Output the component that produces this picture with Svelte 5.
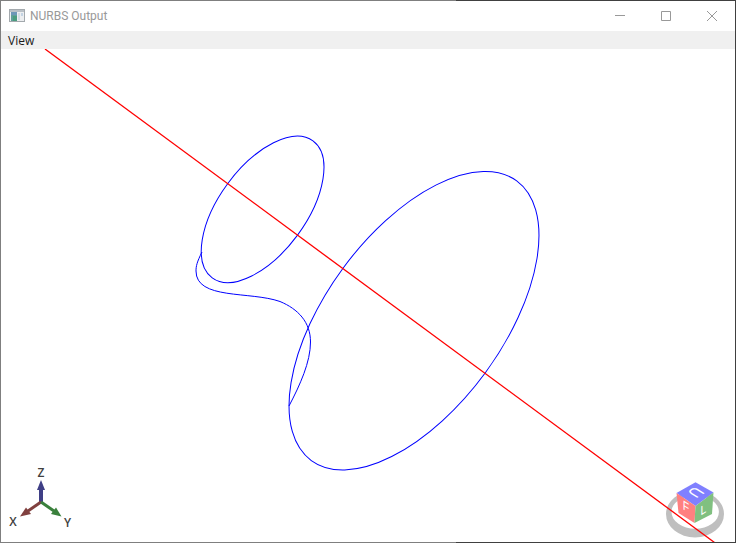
<script>
  const ellipses = [
    { cx: 262.6, cy: 209.4, rx: 85, ry: 43.4, angle: -53.65 },
    { cx: 414, cy: 320.7, rx: 173.5, ry: 88.3, angle: -53.7 }
  ];
</script>

<main class="window">
  <header class="titlebar">
    <svg class="app-icon" viewBox="0 0 16 14" width="16" height="14" aria-hidden="true">
      <rect x="0.5" y="0.5" width="15" height="12" fill="#eceef0" stroke="#a3a9ad" />
      <rect x="1" y="1" width="14" height="2" fill="#b9c0c6" />
      <rect x="2" y="3" width="6" height="9" fill="#5f9f9a" />
      <rect x="2" y="3" width="6" height="3" fill="#6d97b8" />
      <rect x="4" y="7" width="4" height="5" fill="#4b9c7e" />
      <rect x="9" y="4" width="2" height="7" fill="#d3dce4" />
      <rect x="12" y="4" width="2" height="3" fill="#c3d3e3" />
    </svg>
    <h1>NURBS Output</h1>
    <div class="controls">
      <button aria-label="Minimize">
        <svg viewBox="0 0 10 10" width="10" height="10"><path d="M0 4.5H10" /></svg>
      </button>
      <button aria-label="Maximize">
        <svg viewBox="0 0 10 10" width="10" height="10"><path d="M.5 .5H9.5V9.5H.5Z" /></svg>
      </button>
      <button aria-label="Close">
        <svg viewBox="0 0 10 10" width="10" height="10"><path d="M0 0L10 10M10 0L0 10" /></svg>
      </button>
    </div>
  </header>

  <nav class="menubar"><button>View</button></nav>

  <svg class="scene" viewBox="1 49 734 493" role="img" aria-label="NURBS curves">
    <g class="curves">
      {#each ellipses as e}
        <ellipse cx={e.cx} cy={e.cy} rx={e.rx} ry={e.ry} transform="rotate({e.angle} {e.cx} {e.cy})" />
      {/each}
      <path d="M202 252C197 262 196 266 196 271C196 300 250 291 280 301.500C298 309 310.5 322 310.5 342C310.5 362 300 385 289 406" />
    </g>

    <g class="triad">
      <path d="M41 502V487" stroke="#3f3f86" stroke-width="4" />
      <path d="M41 480L45 490H37Z" fill="#3f3f86" />
      <path d="M41 502L28 511" stroke="#80403f" stroke-width="3" />
      <path d="M20 516.500L26 507.500L31 514Z" fill="#80403f" />
      <path d="M41 502L54 511" stroke="#3a803c" stroke-width="3" />
      <path d="M61.500 516.500L51 514L56 507.500Z" fill="#3a803c" />
      <text x="41" y="477">Z</text>
      <text x="13" y="526">X</text>
      <text x="67.500" y="527">Y</text>
    </g>

    <g class="cube">
      <path
        fill="#bfbfbf"
        fill-rule="evenodd"
        d="M666 514a29 23.500 0 1 0 58 0a29 23.500 0 1 0 -58 0ZM671.500 512a23.700 16.700 0 1 0 47.400 0a23.700 16.700 0 1 0 -47.400 0Z"
      />
      <path fill="#8080ff" d="M676.500 493L695.500 482.300L713.500 492.500L695.500 506Z" />
      <path fill="#ff8080" d="M676.500 493L695.500 506L694.500 523L678.500 513Z" />
      <path fill="#80c080" d="M695.500 506L713.500 492.500L712 514L694.500 523Z" />
      <text class="top" transform="matrix(-.8 .5 -.9 -.55 691 489.500)">U</text>
      <text transform="matrix(.8 .5 0 1 686 511)">F</text>
      <text transform="matrix(.8 -.5 0 1 703.500 514)">L</text>
    </g>
    <path class="axis" d="M45 49L714.500 542.500" />
  </svg>
</main>

<style>
  :global(body) {
    margin: 0;
  }
  .window {
    box-sizing: border-box;
    height: 100vh;
    display: flex;
    flex-direction: column;
    border: 1px solid transparent;
    background:
      linear-gradient(#fff, #fff) padding-box,
      linear-gradient(to right, #7f7f7f 62%, #404040 62%) border-box;
    font: 12px/16px "Open Sans", "Noto Sans", sans-serif;
  }
  .titlebar {
    height: 30px;
    flex: none;
    display: flex;
    align-items: center;
    padding-left: 8px;
    gap: 5px;
  }
  h1 {
    flex: 1;
    margin: 0;
    font: 12px/16px Roboto, sans-serif;
    color: #999;
  }
  button {
    font: inherit;
    color: inherit;
    border: 0;
    padding: 0;
    background: none;
  }
  .controls {
    display: flex;
    height: 100%;
  }
  .controls button {
    width: 46px;
    display: flex;
    align-items: center;
    justify-content: center;
  }
  .controls path {
    fill: none;
    stroke: #999;
  }
  .menubar {
    height: 18px;
    flex: none;
    box-sizing: border-box;
    display: flex;
    align-items: center;
    padding: 2px 0 0 7px;
    background: #f0f0f0;
    color: #1a1a1a;
  }
  .scene {
    display: block;
    flex: 1;
    min-height: 0;
    width: 100%;
  }
  .curves {
    fill: none;
    stroke: #00f;
  }
  .axis {
    fill: none;
    stroke: #f00;
    stroke-width: 1.3;
  }
  .triad text {
    font: 600 12px "Open Sans", sans-serif;
    fill: #404040;
    text-anchor: middle;
  }
  .cube text {
    font: 13px "Liberation Sans", sans-serif;
    fill: #fff;
    text-anchor: middle;
  }
  .cube .top {
    font-size: 16px;
  }
</style>
